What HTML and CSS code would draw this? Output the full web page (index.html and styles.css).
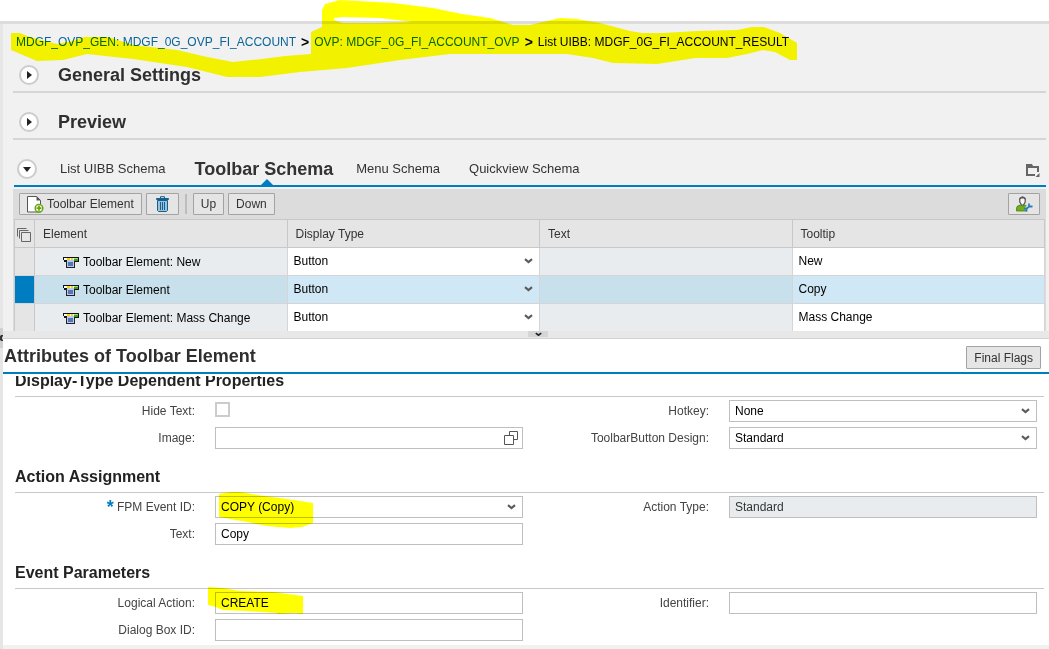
FILE: index.html
```html
<!DOCTYPE html>
<html lang="en">
<head>
<meta charset="utf-8">
<title>Toolbar Schema</title>
<link rel="stylesheet" href="styles.css">
</head>
<body>
<svg class="defs" width="0" height="0" aria-hidden="true">
  <symbol id="chevron" viewBox="0 0 9 6"><path d="M1 1.200 4.500 4 8 1.200" fill="none" stroke="currentColor" stroke-width="2.200"/></symbol>
  <symbol id="element" viewBox="0 0 16 11">
    <path d="M0 0h16v5h-4v1h-1V3H4v3H3V5H1V3H0z" fill="#111"/>
    <path d="M1 1h4v2H1z" fill="#fff"/><path d="M4 1h3v2H4zM8 1h2v2H8z" fill="#f7d800"/><path d="M7 1h1v2H7zM10 1h1v2h-1z" fill="#fff"/>
    <path d="M11 1h4v1h-4z" fill="#9be08a"/><path d="M11 2h4v2h-4z" fill="#3f9c1c"/>
    <path d="M3 4h9v7H3z" fill="#222"/><path d="M4 3h7v7H4z" fill="#b9c9ec"/><path d="M5 5h5v4H5z" fill="#5575b8"/>
  </symbol>
</svg>
<header class="top-space"></header>
<div class="frame">
  <div class="rail"><span class="rail-handle"><svg width="3" height="6" viewBox="0 0 3 6"><path d="M3 0 1 1.500V4.500L3 6" fill="none" stroke="#333" stroke-width="2"/></svg></span></div>
  <main class="content">
    <div class="upper">
      <nav class="crumbs" aria-label="Breadcrumb">
        <a href="#gen">MDGF_OVP_GEN: MDGF_0G_OVP_FI_ACCOUNT</a>
        <b>&gt;</b>
        <a href="#ovp">OVP: MDGF_0G_FI_ACCOUNT_OVP</a>
        <b>&gt;</b>
        <span>List UIBB: MDGF_0G_FI_ACCOUNT_RESULT</span>
      </nav>
      <svg class="marker crumbs-marker" width="800" height="80" viewBox="0 0 800 80" aria-hidden="true">
        <path fill-rule="evenodd" d="M11 33H20L30 37 41 40 57 44 73 41 84 37H108L133 45 177 50 207 57 233 62 262 59 285 56 311 54V32L322 27V10L325 4 340 0 393 3 433 8 462 14 490 18 513 25H530L547 21 560 18 577 19 600 23 630 31 642 33H663L697 31 737 30 752 27H764L780 33 792 40 797 43V60H790L775 52 763 50 747 54 727 58H695L670 62 657 64 613 63 593 58 567 54 450 54 400 60 347 68 300 72 260 77H227L187 67 133 59 87 54 63 60 37 61 11 50ZM334 18 343 17 380 18 413 22 375 23H343L334 20Z"/>
      </svg>
      <section class="section first">
        <button class="round" aria-label="Expand General Settings"><svg width="5" height="8" viewBox="0 0 5 8"><path d="M0 0 5 4 0 8z"/></svg></button>
        <h2>General Settings</h2>
      </section>
      <section class="section">
        <button class="round" aria-label="Expand Preview"><svg width="5" height="8" viewBox="0 0 5 8"><path d="M0 0 5 4 0 8z"/></svg></button>
        <h2>Preview</h2>
      </section>
      <nav class="tabs" aria-label="Schemas">
        <button class="round" aria-label="Collapse"><svg width="8" height="5" viewBox="0 0 8 5"><path d="M0 0h8L4 5z"/></svg></button>
        <a class="tab" href="#list">List UIBB Schema</a>
        <a class="tab active" href="#toolbar">Toolbar Schema</a>
        <a class="tab" href="#menu">Menu Schema</a>
        <a class="tab" href="#quick">Quickview Schema</a>
        <button class="folder" aria-label="Personalize tabs"><svg width="14" height="13" viewBox="0 0 14 13"><path d="M0 0h6l1 2h6v6h-2V4H2v6h7v2H0zM13.500 9v4H9.500z" fill="#666"/></svg></button>
      </nav>
      <div class="grid">
        <div class="toolbar">
          <button class="btn add"><svg width="17" height="17" viewBox="0 0 17 17"><path d="M.5.500h9l4 4V16H.5z" fill="#fff" stroke="#555"/><path d="M9.500 0 14 4.500H9.500z" fill="#555"/><circle cx="12" cy="12.200" r="3.800" fill="#fff" stroke="#6ba612" stroke-width="1.500"/><path d="M12 9.700v5M9.500 12.200h5" stroke="#6ba612" stroke-width="1.800"/></svg>Toolbar Element</button>
          <button class="btn trash" aria-label="Delete"><svg width="13" height="16" viewBox="0 0 13 16"><path d="M4.500 2V.700h4V2" fill="none" stroke="#145f91"/><path d="M.5 2.500h12v1H.5z" fill="#8fb6d0" stroke="#145f91"/><path d="M1.500 4.500h10V14.500l-1 1h-8l-1-1z" fill="#9fc1d6" stroke="#145f91"/><path d="M4.500 6v8M6.500 6v8M8.500 6v8" stroke="#145f91"/></svg></button>
          <span class="sep"></span>
          <button class="btn up">Up</button>
          <button class="btn">Down</button>
          <button class="btn settings" aria-label="Settings"><svg width="17" height="16" viewBox="0 0 17 16"><path d="M.5 15V12Q.5 9.500 4.500 9L6.500 10l2-1q2.500.5 2.500 2v4z" fill="#6fae1b" stroke="#477d12" stroke-width=".8"/><path d="M3.800 2.500Q6.500-.5 9.200 2.500V6L7.500 9h-2L3.800 6z" fill="#f5f5f5" stroke="#555" stroke-width="1.200"/><path d="M3.500 4V2.500Q6.500-1.500 9.500 2.500V4L8 2.500H5z" fill="#555"/><path d="M9.500 14 14 9.500" stroke="#e5e5e5" stroke-width="4"/><path d="M9.500 13.800 13.500 10M13 7.500v3h3.500M8 12.500h2.500v3" fill="none" stroke="#2b7fb8" stroke-width="1.800"/></svg></button>
        </div>
        <table>
          <colgroup><col class="pick"><col><col><col><col></colgroup>
          <thead>
            <tr>
              <th aria-label="Select"><svg class="stack" width="15" height="15" viewBox="0 0 15 15"><path d="M4.500 4.500h9v9h-9zM2.500 10.500v-8h9M.5 8.500v-8h9" fill="none" stroke="#666"/></svg></th>
              <th>Element</th><th>Display Type</th><th>Text</th><th>Tooltip</th>
            </tr>
          </thead>
          <tbody>
            <tr>
              <td class="pick-cell"></td>
              <td class="name"><svg width="16" height="11"><use href="#element"/></svg>Toolbar Element: New</td>
              <td class="edit"><div class="pull"><select aria-label="Display type, row 1"><option>Button</option></select><svg width="9" height="6"><use href="#chevron"/></svg></div></td>
              <td class="locked"></td>
              <td class="edit"><input aria-label="Tooltip, row 1" value="New"></td>
            </tr>
            <tr class="selected">
              <td class="pick-cell"></td>
              <td class="name"><svg width="16" height="11"><use href="#element"/></svg>Toolbar Element</td>
              <td class="edit"><div class="pull"><select aria-label="Display type, row 2"><option>Button</option></select><svg width="9" height="6"><use href="#chevron"/></svg></div></td>
              <td class="locked"></td>
              <td class="edit"><input aria-label="Tooltip, row 2" value="Copy"></td>
            </tr>
            <tr>
              <td class="pick-cell"></td>
              <td class="name"><svg width="16" height="11"><use href="#element"/></svg>Toolbar Element: Mass Change</td>
              <td class="edit"><div class="pull"><select aria-label="Display type, row 3"><option>Button</option></select><svg width="9" height="6"><use href="#chevron"/></svg></div></td>
              <td class="locked"></td>
              <td class="edit"><input aria-label="Tooltip, row 3" value="Mass Change"></td>
            </tr>
          </tbody>
        </table>
      </div>
    </div>
    <div class="splitter"><span><svg width="7" height="5" viewBox="0 0 9 6"><use href="#chevron"/></svg></span></div>
    <section class="panel">
      <header class="panel-head"><h2>Attributes of Toolbar Element</h2><button class="btn flags">Final Flags</button></header>
      <div class="scroll">
        <form class="form">
          <h3>Display-Type Dependent Properties</h3>
          <div class="fields">
            <label for="hide">Hide Text:</label><div class="cell"><input type="checkbox" id="hide"></div>
            <label for="hotkey">Hotkey:</label><div class="pull box"><select id="hotkey"><option>None</option></select><svg width="9" height="6"><use href="#chevron"/></svg></div>
            <label for="image">Image:</label><div class="pull box"><input id="image"><svg class="help" width="15" height="15" viewBox="0 0 15 15"><path d="M.5 4.500h9v9h-9zM5.500 4V.500h8v8H10" fill="none" stroke="#555"/></svg></div>
            <label for="design">ToolbarButton Design:</label><div class="pull box"><select id="design"><option>Standard</option></select><svg width="9" height="6"><use href="#chevron"/></svg></div>
          </div>
          <h3>Action Assignment</h3>
          <div class="fields">
            <label for="event"><span class="star">*</span> FPM Event ID:</label><div class="pull box"><select id="event"><option>COPY (Copy)</option></select><svg width="9" height="6"><use href="#chevron"/></svg><svg class="marker field-marker" width="110" height="40" viewBox="-8 -6 110 40"><path d="M4-2 15-4H25L42-1 72 3 98 7V27L87 31 75 32 52 30 32 26 4 21z"/></svg></div>
            <label for="atype">Action Type:</label><div class="box locked"><input id="atype" value="Standard" readonly></div>
            <label for="text">Text:</label><div class="box"><input id="text" value="Copy"></div>
          </div>
          <h3>Event Parameters</h3>
          <div class="fields">
            <label for="logical">Logical Action:</label><div class="pull box"><input id="logical" value="CREATE"><svg class="marker field-marker" width="110" height="40" viewBox="-8 -6 110 40"><path d="M-7-5 8-4 25-1 58 0 88 4V22L80 21 62 22V21L32 19 8 18-2 14-7 13z"/></svg></div>
            <label for="ident">Identifier:</label><div class="box"><input id="ident"></div>
            <label for="dialog">Dialog Box ID:</label><div class="box"><input id="dialog"></div>
          </div>
        </form>
      </div>
    </section>
  </main>
</div>
</body>
</html>
```
FILE: styles.css
```css
* { box-sizing: border-box; }
body {
  margin: 0;
  min-height: 100vh;
  display: flex;
  flex-direction: column;
  font: 12px/16px "Liberation Sans", Arial, sans-serif;
  color: #333;
  background: #fff;
}
h2, h3 { margin: 0; font-weight: bold; }
h2 { font-size: 18px; line-height: 20px; }
button, input, select { font: inherit; color: inherit; margin: 0; }
svg { display: block; flex: none; }
a { text-decoration: none; }
.defs { position: absolute; }

.top-space { height: 24px; border-bottom: 3px solid #dcdcdc; }
.frame { flex: 1; display: flex; background: #f1f1f1; }
.rail { flex: none; width: 3px; background: #e6e6e6; position: relative; }
.rail-handle {
  position: absolute;
  top: 304px;
  left: 0;
  width: 3px;
  height: 20px;
  padding-top: 7px;
  background: #d0d0d0;
}
.content { flex: 1; min-width: 0; }
.upper { position: relative; padding: 0 3px 0 10px; }

.crumbs {
  display: flex;
  gap: 5px;
  padding: 12px 0 0 3px;
  line-height: 12px;
  white-space: nowrap;
  color: #000;
}
.crumbs a { color: #0a6599; }
.crumbs b { font-size: 14px; }
.marker {
  position: absolute;
  mix-blend-mode: multiply;
  fill: #ff0;
  pointer-events: none;
}
.crumbs-marker { left: -3px; top: -24px; }

.section, .tabs { display: flex; align-items: center; padding-top: 19px; padding-bottom: 6px; line-height: 20px; }
.section { gap: 19px; padding-left: 6px; border-bottom: 2px solid #d5d5d5; }
.section.first { padding-top: 17px; }
.round {
  flex: none;
  width: 20px;
  height: 20px;
  display: flex;
  align-items: center;
  justify-content: center;
  padding: 0;
  border: 2px solid #ccc;
  border-radius: 50%;
  background: #fff;
  fill: #222;
}
.section h2, .panel-head h2 { color: #2f2f2f; }
.tabs { padding-left: 3px; margin-left: 1px; border-bottom: 2px solid #007cc0; }
.tabs .round { margin-right: 23px; }
.tab { color: #333; font-size: 13px; margin-right: 29px; position: relative; white-space: nowrap; }
.tab.active { font-size: 18px; font-weight: bold; margin-right: 23px; }
.tab.active::after {
  content: "";
  position: absolute;
  left: 50%;
  bottom: -6px;
  margin-left: -3px;
  border: 6px solid transparent;
  border-top: 0;
  border-bottom-color: #007cc0;
}
.folder { margin-left: auto; margin-right: 6px; padding: 2px 0 0; border: 0; background: none; }

.grid { margin-top: 2px; padding: 0 1px 0 1px; background: #dcdcdc; }
.toolbar { display: flex; align-items: center; gap: 4px; padding: 4px 5px 4px 5px; }
.btn {
  display: flex;
  align-items: center;
  justify-content: center;
  height: 22px;
  padding: 0 7px;
  border: 1px solid #a3a3a3;
  border-radius: 1px;
  background: #e5e5e5;
  color: #333;
  white-space: nowrap;
}
.btn.add { gap: 3px; }
.btn.trash { width: 33px; padding: 0; }
.btn.settings { width: 32px; padding: 0; margin-left: auto; }
.sep { width: 2px; height: 20px; margin: 0 2px; background: #bdbdbd; }

table {
  width: 100%;
  table-layout: fixed;
  border-collapse: separate;
  border-spacing: 0;
  border-top: 1px solid #c8c8c8;
  border-left: 1px solid #c8c8c8;
}
.pick { width: 20px; }
th, td { height: 28px; padding: 0; border-right: 1px solid #d5d5d5; border-bottom: 1px solid #d5d5d5; }
th { padding-left: 8px; text-align: left; font-weight: normal; background: #e5e5e5; border-color: #c8c8c8; }
th:first-child { padding-left: 2px; padding-top: 3px; }
td { background: #fff; color: #000; }
tbody tr:last-child td { height: 27px; border-bottom: 0; }
td.pick-cell { background: #e5e5e5; border-right-color: #c8c8c8; }
td.name svg { display: inline-block; vertical-align: -2px; margin: 0 4px 0 28px; }
td.name, .locked { background: #e8ecef; }
td.edit { padding: 0 0 2px 1px; }
.selected td { background: #d0e8f5; }
.selected td.name, .selected td.locked { background: #c8e0ec; }
.selected td.pick-cell { background: #007cc0; }

.pull { position: relative; display: flex; align-items: center; }
.pull > svg { position: absolute; right: 6px; color: #5c5c5c; pointer-events: none; }
.pull > .help { right: 3px; }
.pull > .field-marker { left: -9px; right: auto; top: -7px; }
select, input:not([type]) {
  appearance: none;
  display: block;
  width: 100%;
  height: 20px;
  padding: 0 5px;
  border: 0;
  border-radius: 0;
  background: transparent;
  outline: 0;
}

.splitter { display: flex; justify-content: center; height: 8px; background: #e8e8e8; border-bottom: 1px solid #d2d2d2; }
.splitter span { width: 20px; height: 6px; display: flex; align-items: center; justify-content: center; background: #d5d5d5; color: #222; margin-left: 24px; }

.panel { background: #fff; }
.panel-head {
  display: flex;
  justify-content: space-between;
  padding: 7px 8px 3px 1px;
  border-bottom: 2px solid #007cc0;
}
.btn.flags { height: 23px; }
.scroll { margin-top: 2px; overflow: hidden; padding: 0 5px 4px 12px; }
.form { margin-top: -23px; }
h3 { padding: 18px 0 5px; font-size: 16px; line-height: 20px; color: #222; border-bottom: 1px solid #c8c8c8; }
.fields {
  display: grid;
  grid-template-columns: 200px 1fr 206px 1fr;
  row-gap: 5px;
  padding: 3px 7px 0 0;
}
.fields label { padding-right: 20px; text-align: right; line-height: 22px; color: #444; white-space: nowrap; }
.star { color: #007cc0; font-size: 18px; font-weight: bold; line-height: 12px; vertical-align: -2px; }
.box { height: 22px; border: 1px solid #bfbfbf; color: #000; min-width: 0; }
.box.locked { color: #333; }
.cell { display: flex; padding-top: 2px; }
input[type="checkbox"] { appearance: none; width: 15px; height: 15px; border: 2px solid #ccc; background: #fff; }
```
